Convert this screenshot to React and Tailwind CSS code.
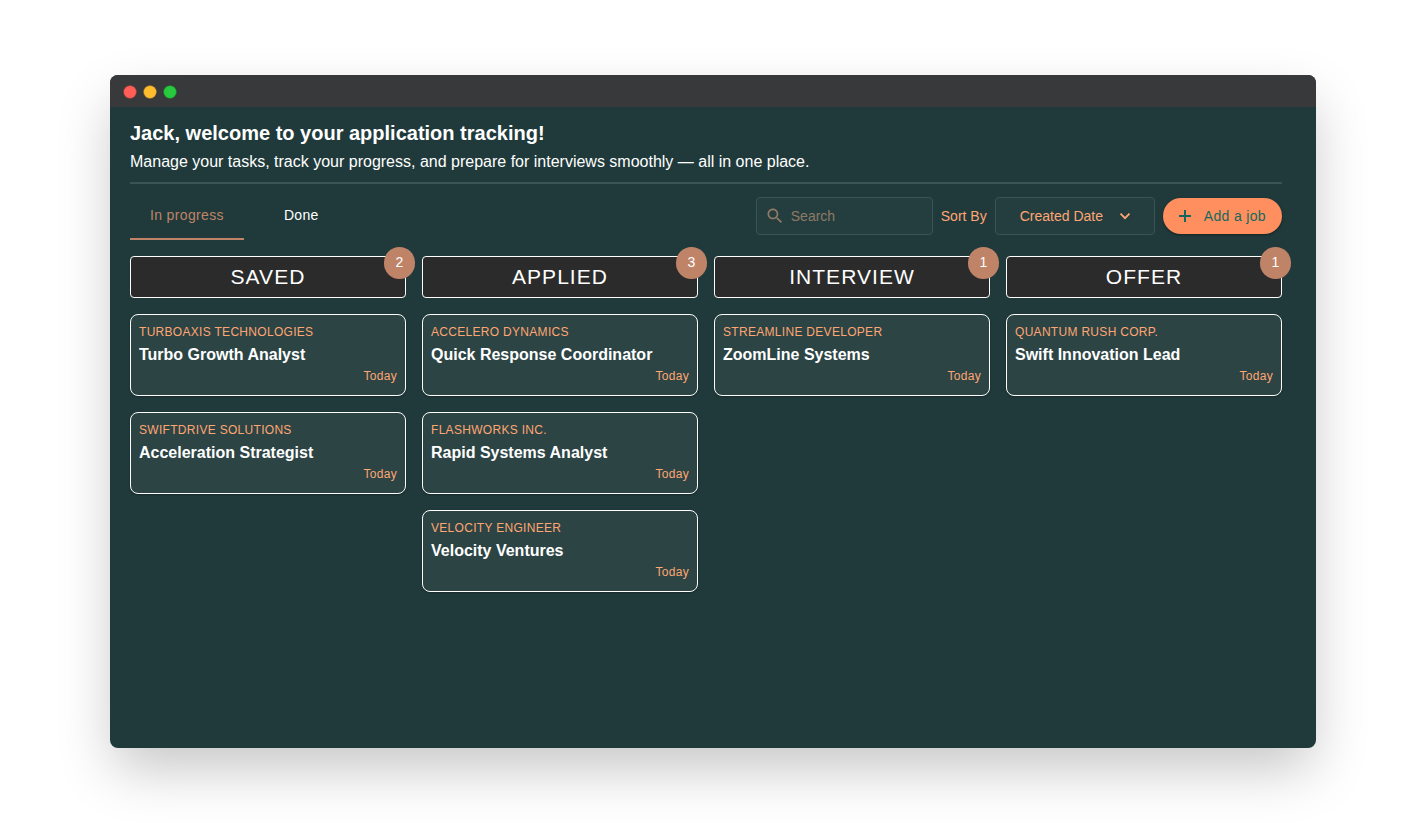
import React from "react";

const columns = [
  {
    title: "SAVED",
    jobs: [
      { company: "TURBOAXIS TECHNOLOGIES", role: "Turbo Growth Analyst" },
      { company: "SWIFTDRIVE SOLUTIONS", role: "Acceleration Strategist" },
    ],
  },
  {
    title: "APPLIED",
    jobs: [
      { company: "ACCELERO DYNAMICS", role: "Quick Response Coordinator" },
      { company: "FLASHWORKS INC.", role: "Rapid Systems Analyst" },
      { company: "VELOCITY ENGINEER", role: "Velocity Ventures" },
    ],
  },
  {
    title: "INTERVIEW",
    jobs: [{ company: "STREAMLINE DEVELOPER", role: "ZoomLine Systems" }],
  },
  {
    title: "OFFER",
    jobs: [{ company: "QUANTUM RUSH CORP.", role: "Swift Innovation Lead" }],
  },
];

function JobCard({ company, role }) {
  return (
    <li className="flex flex-col rounded-lg border border-white bg-[#2c4444] px-2 pt-[9px] pb-[11px] shadow-[0_1px_2px_rgba(0,0,0,0.3)]">
      <p className="text-xs leading-4 tracking-wide text-[#ffa673]">{company}</p>
      <h3 className="mt-[3px] text-base leading-6 font-bold text-white">{role}</h3>
      <p className="mt-px self-end text-xs leading-4 tracking-wide text-[#ffa673]">Today</p>
    </li>
  );
}

function Column({ title, jobs }) {
  return (
    <section className="flex min-w-0 flex-col gap-4">
      <header className="relative flex h-[42px] items-center justify-center rounded border border-white bg-[#2b2b2b]">
        <h2 className="text-[21px] leading-8 tracking-wider text-white">{title}</h2>
        <span className="absolute -top-2.5 -right-2.5 flex h-8 w-[31px] justify-center rounded-full bg-[#bf8468] text-sm leading-[30px] text-white">
          {jobs.length}
        </span>
      </header>
      <ul className="flex flex-col gap-4">
        {jobs.map((job) => (
          <JobCard key={job.company} {...job} />
        ))}
      </ul>
    </section>
  );
}

export default function App() {
  return (
    <div className="flex min-h-screen bg-white px-[110px] py-[75px] font-['Liberation_Sans',Arial,sans-serif]">
      <div className="flex min-w-0 flex-1 flex-col overflow-hidden rounded-lg bg-[#203a3b] shadow-[0_24px_56px_-4px_rgba(0,0,0,0.23)]">
        <div className="flex h-8 items-center bg-[#38393b] px-[13px] pt-0.5">
          <svg width="54" height="14" viewBox="0 0 54 14" aria-hidden="true">
            <circle cx="7" cy="7" r="6.25" fill="#ff5f56" stroke="#e0443e" strokeWidth="0.5" />
            <circle cx="27" cy="7" r="6.25" fill="#ffbd2e" stroke="#dea123" strokeWidth="0.5" />
            <circle cx="47" cy="7" r="6.25" fill="#27c93f" stroke="#1aab29" strokeWidth="0.5" />
          </svg>
        </div>
        <main className="pt-2.5 pr-[34px] pb-10 pl-5">
          <div className="border-b-2 border-[#3a5355] pb-2 text-white">
            <h1 className="text-xl leading-8 font-bold">Jack, welcome to your application tracking!</h1>
            <p className="mt-px text-base leading-6">
              Manage your tasks, track your progress, and prepare for interviews smoothly — all in one place.
            </p>
          </div>

          <div className="mt-2 flex items-center justify-between">
            <nav className="flex gap-5" aria-label="Applications">
              <button type="button" className="h-12 border-b-2 border-[#bf8468] px-5 text-sm tracking-wide text-[#bf8468]">
                In progress
              </button>
              <button type="button" className="h-12 border-b-2 border-transparent px-5 text-sm tracking-wide text-white">
                Done
              </button>
            </nav>
            <div className="flex items-center gap-2">
              <label className="flex h-[38px] w-[177px] items-center gap-1.5 rounded border border-[#3a5355] bg-[#243e3f] pl-2 text-[#8f7a66]">
                <svg className="shrink-0" width="20" height="20" viewBox="0 0 24 24" fill="currentColor" aria-hidden="true">
                  <path d="M15.5 14h-.79l-.28-.27C15.41 12.59 16 11.11 16 9.5 16 5.91 13.09 3 9.5 3S3 5.91 3 9.5 5.91 16 9.5 16c1.61 0 3.09-.59 4.23-1.57l.27.28v.79l5 4.99L20.49 19l-4.99-5zm-6 0C7.01 14 5 11.99 5 9.5S7.01 5 9.5 5 14 7.01 14 9.5 11.99 14 9.5 14z" />
                </svg>
                <input
                  type="search"
                  aria-label="Search"
                  placeholder="Search"
                  className="w-full min-w-0 bg-transparent text-sm text-[#ffa673] outline-none placeholder:text-[#8f7a66]"
                />
              </label>
              <label htmlFor="sort" className="text-sm text-[#ffa673]">
                Sort By
              </label>
              <div className="grid w-40 items-center rounded border border-[#3a5355] bg-[#243e3f]">
                <select
                  id="sort"
                  className="col-start-1 row-start-1 h-9 w-full appearance-none bg-transparent pl-6 text-sm text-[#ffa673] outline-none"
                >
                  <option>Created Date</option>
                </select>
                <svg
                  className="pointer-events-none col-start-1 row-start-1 mr-5 justify-self-end text-[#ffa673]"
                  width="18"
                  height="18"
                  viewBox="0 0 18 18"
                  fill="none"
                  stroke="currentColor"
                  strokeWidth="1.8"
                  aria-hidden="true"
                >
                  <path d="M4.500 6.700L9 11.200L13.500 6.700" />
                </svg>
              </div>
              <button
                type="button"
                className="flex h-9 items-center gap-[9px] rounded-full bg-[#ff8f5e] px-4 text-sm tracking-wide text-[#14695f] shadow-[0_1px_3px_rgba(0,0,0,0.4)]"
              >
                <svg className="-ml-1" width="20" height="20" viewBox="0 0 20 20" fill="currentColor" aria-hidden="true">
                  <path d="M16 11h-5v5H9v-5H4V9h5V4h2v5h5z" />
                </svg>
                Add a job
              </button>
            </div>
          </div>

          <div className="mt-4 grid grid-cols-4 gap-4">
            {columns.map((column) => (
              <Column key={column.title} {...column} />
            ))}
          </div>
        </main>
      </div>
    </div>
  );
}
